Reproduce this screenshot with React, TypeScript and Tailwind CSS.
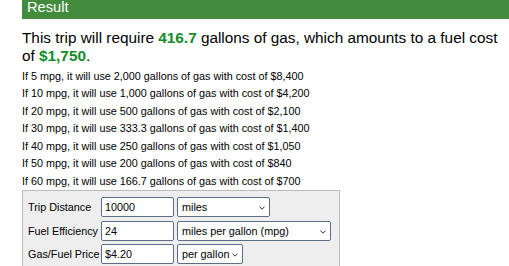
import { useState } from "react";

const LINES = [
  { mpg: 5, gal: "2,000", cost: "$8,400" },
  { mpg: 10, gal: "1,000", cost: "$4,200" },
  { mpg: 20, gal: "500", cost: "$2,100" },
  { mpg: 30, gal: "333.3", cost: "$1,400" },
  { mpg: 40, gal: "250", cost: "$1,050" },
  { mpg: 50, gal: "200", cost: "$840" },
  { mpg: 60, gal: "166.7", cost: "$700" },
];

function Chevron() {
  return (
    <svg
      width="6"
      height="4"
      viewBox="0 0 6 4"
      className="absolute right-[5px] top-[9px] pointer-events-none"
    >
      <polyline points="0.5,0.6 3,3.2 5.5,0.6" fill="none" stroke="#333" strokeWidth="1" />
    </svg>
  );
}

function Select({
  value,
  options,
  width,
}: {
  value: string;
  options: string[];
  width: string;
}) {
  const [v, setV] = useState(value);
  return (
    <div className={`relative h-[20px] ${width}`}>
      <select
        value={v}
        onChange={(e) => setV(e.target.value)}
        className="block appearance-none w-full h-[20px] bg-white border border-[#5a6e85] rounded-[2px] pl-[4px] text-[10.8px] leading-[18px] text-black outline-none"
      >
        {options.map((o) => (
          <option key={o}>{o}</option>
        ))}
      </select>
      <Chevron />
    </div>
  );
}

function Field({ label, value }: { label: string; value: string }) {
  const [v, setV] = useState(value);
  return (
    <>
      <span className="block text-[10.8px] leading-[20px] whitespace-nowrap">{label}</span>
      <input
        value={v}
        onChange={(e) => setV(e.target.value)}
        className="block w-[73px] h-[20px] bg-white border border-[#5a6e85] rounded-[2px] pl-[3px] text-[10.8px] text-black outline-none"
      />
    </>
  );
}

export default function App() {
  return (
    <div className="pl-[22px] pr-[4px] font-['Liberation_Sans',Arial,sans-serif] text-black bg-white h-[266px] overflow-hidden">
      <div className="h-[19px] bg-[#428a3c] text-white text-[14.67px] leading-[15px] pl-[5px] -mr-[4px]">
        Result
      </div>

      <p className="mt-[10px] text-[15.33px] leading-[18px]">
        This trip will require <b className="text-[#128c2b]">416.7</b> gallons of gas, which
        amounts to a fuel cost of <b className="text-[#128c2b]">$1,750</b>.
      </p>

      <div className="mt-[2.5px] text-[10.8px] leading-[17.5px]">
        {LINES.map((l) => (
          <div key={l.mpg}>
            If {l.mpg} mpg, it will use {l.gal} gallons of gas with cost of {l.cost}
          </div>
        ))}
      </div>

      <div className="w-[318px] h-[90px] bg-[#eeeeee] border border-[#bbbbbb] pt-[6px] pl-[5px]">
        <div className="grid grid-cols-[73px_76px_auto] gap-y-[3.5px] items-center">
          <Field label="Trip Distance" value="10000" />
          <Select value="miles" options={["miles", "kilometers"]} width="w-[93px]" />
          <Field label="Fuel Efficiency" value="24" />
          <Select
            value="miles per gallon (mpg)"
            options={["miles per gallon (mpg)", "liters/100 km", "km per liter"]}
            width="w-[154px]"
          />
          <Field label="Gas/Fuel Price" value="$4.20" />
          <Select value="per gallon" options={["per gallon", "per liter"]} width="w-[66px]" />
        </div>
      </div>
    </div>
  );
}
